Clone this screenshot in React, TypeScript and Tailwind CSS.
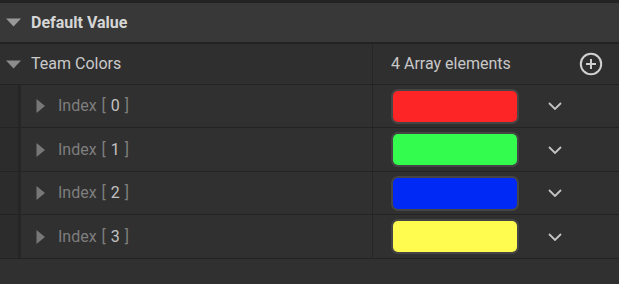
import React from 'react';

const rows = [
  { index: 0, color: '#fe2527', h: 'h-[42px]' },
  { index: 1, color: '#34fc4e', h: 'h-[43px]' },
  { index: 2, color: '#0029f6', h: 'h-[42px]' },
  { index: 3, color: '#fffb4f', h: 'h-[43px]' },
];

const DownTriangle = ({ color }: { color: string }) => (
  <svg width="15" height="9" viewBox="0 0 15 9" className="shrink-0">
    <path d="M0 0.5 H15 L7.5 8.5 Z" fill={color} />
  </svg>
);

const RightTriangle = () => (
  <svg width="9" height="14" viewBox="0 0 9 14" className="shrink-0">
    <path d="M0.5 0 L9 7 L0.5 14 Z" fill="#777777" />
  </svg>
);

const Chevron = () => (
  <svg width="14" height="8" viewBox="0 0 14 8">
    <path d="M1 1 L7 7 L13 1" fill="none" stroke="#c4c4c4" strokeWidth="1.8" />
  </svg>
);

const PlusCircle = () => (
  <svg width="24" height="24" viewBox="0 0 24 24">
    <circle cx="12" cy="12" r="10.2" fill="none" stroke="#d0d0d0" strokeWidth="2" />
    <path d="M12 7 V17 M7 12 H17" stroke="#d0d0d0" strokeWidth="2" />
  </svg>
);

const App: React.FC = () => {
  return (
    <div className="w-[619px] h-[284px] bg-[#303030] overflow-hidden font-['Roboto',sans-serif]">
      <div className="h-[3px] bg-[#232323]" />
      <div className="h-[39px] bg-[#383838] flex items-center pl-[6px]">
        <DownTriangle color="#999999" />
        <span className="ml-[10px] text-[16px] font-bold text-[#d6d6d6]">Default Value</span>
      </div>
      <div className="h-[2px] bg-[#232323]" />

      <div className="h-[40px] bg-[#2f2f2f] flex">
        <div className="w-[372px] flex items-center pl-[6px]">
          <DownTriangle color="#8c8c8c" />
          <span className="ml-[10px] text-[16px] text-[#cacaca]">Team Colors</span>
        </div>
        <div className="flex-1 border-l border-[#262626] flex items-center pl-[18px] pr-[16px]">
          <span className="text-[16px] text-[#c8c8c8]">4 Array elements</span>
          <div className="ml-auto">
            <PlusCircle />
          </div>
        </div>
      </div>
      <div className="h-px bg-[#232323]" />

      {rows.map((r) => (
        <div key={r.index}>
          <div className={`${r.h} flex`}>
            <div className="w-[18px] bg-[#2c2c2c]" />
            <div className="w-[3px] bg-[#262626]" />
            <div className="w-[351px] flex items-center pl-[15px] bg-[#303030]">
              <RightTriangle />
              <span className="ml-[13px] text-[16px] text-[#7e7e7e] [word-spacing:1px]">
                Index [ <span className="text-[#c2c2c2]">{r.index}</span> ]
              </span>
            </div>
            <div className="flex-1 border-l border-[#262626] flex items-center pl-[18px] bg-[#303030]">
              <div className="w-[128px] h-[35px] border-2 border-[#454545] rounded-[7px] bg-[#454545]">
                <div className="w-full h-full rounded-[5px]" style={{ backgroundColor: r.color }} />
              </div>
              <div className="ml-[29px] flex items-center">
                <Chevron />
              </div>
            </div>
          </div>
          <div className="h-px bg-[#232323]" />
        </div>
      ))}
    </div>
  );
};

export default App;
